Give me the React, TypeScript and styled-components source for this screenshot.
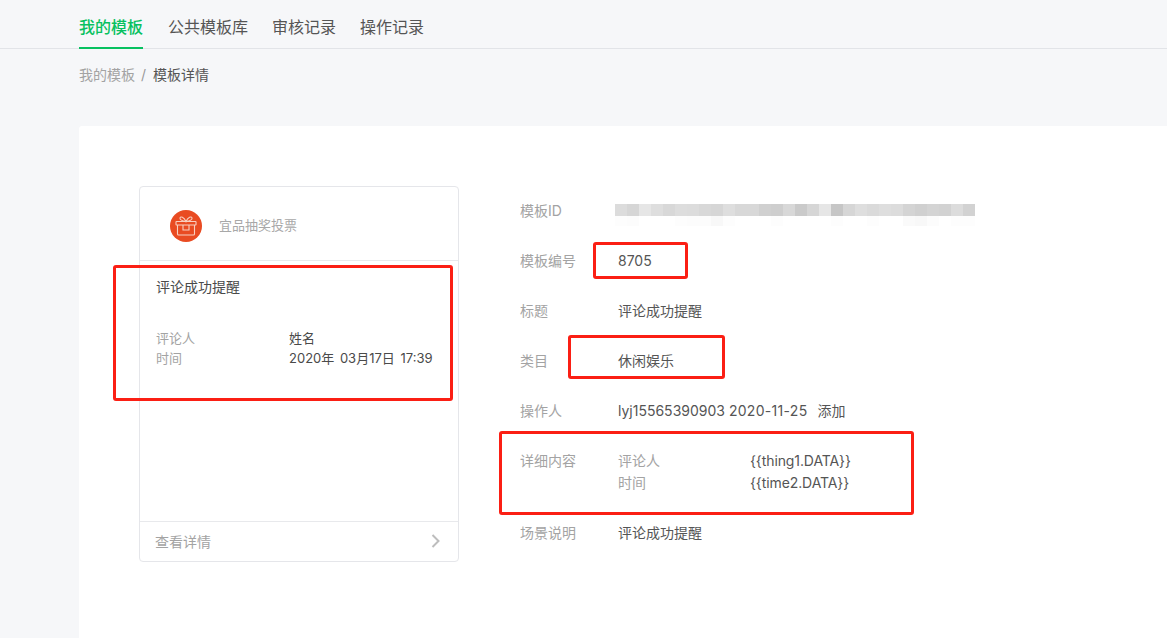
import React from "react";
import styled, { createGlobalStyle } from "styled-components";

const GlobalStyle = createGlobalStyle`
  html, body {
    margin: 0;
    padding: 0;
    background: #f6f7f9;
    font-family: Inter, "Noto Sans CJK SC", "Liberation Sans", sans-serif;
  }
`;

const tabs = ["我的模板", "公共模板库", "审核记录", "操作记录"];

const mosaicTop = [
  "#dcdcdc", "#d6d6d6", "#e6e6e6", "#dedede", "#d8d8d8", "#dddddd", "#dcdcdc", "#d8d8d8", "#d6d6d6", "#dedede",
  "#d8d8d8", "#d8d8d8", "#d0d0d0", "#cecece", "#d8d8d8", "#cacaca", "#d6d6d6", "#e6e6e6", "#c6c6c6", "#d6d6d6",
  "#dedede", "#dadada", "#dedede", "#dcdcdc", "#d4d4d4", "#d0d0d0", "#d4d4d4", "#d2d2d2", "#dcdcdc", "#d2d2d2",
];

const mosaicBottom = [
  "#fdfdfd", "#fcfcfc", "#ffffff", "#ffffff", "#ffffff", "#fdfdfd", "#fcfcfc", "#fcfcfc", "#f8f8f8", "#fdfdfd",
  "#ffffff", "#ffffff", "#ffffff", "#fdfdfd", "#ffffff", "#ffffff", "#ffffff", "#ffffff", "#fdfdfd", "#ffffff",
  "#ffffff", "#fdfdfd", "#ffffff", "#ffffff", "#fafafa", "#f8f8f8", "#fcfcfc", "#ffffff", "#fdfdfd", "#fdfdfd",
];

const GiftIcon = () => (
  <svg width="22" height="22" viewBox="0 0 22 22" fill="none" stroke="#f8cfc0" strokeWidth="1.1">
    <rect x="1" y="6.5" width="20" height="3.5" rx="0.5" />
    <path d="M2.5 10V19a1 1 0 0 0 1 1H18.5a1 1 0 0 0 1-1V10" />
    <path d="M8 10V15H14V10" />
    <path d="M11 6.5C9 2 5.5 1 5 2.8S7 6 11 6.5ZM11 6.5C13 2 16.5 1 17 2.8S15 6 11 6.5Z" />
  </svg>
);

export default function App() {
  return (
    <Page>
      <GlobalStyle />
      <TabBar>
        {tabs.map((t, i) => (
          <Tab key={t} $active={i === 0}>{t}</Tab>
        ))}
      </TabBar>
      <Breadcrumb>
        <CrumbLink>我的模板</CrumbLink>
        <CrumbSep>/</CrumbSep>
        <CrumbCurrent>模板详情</CrumbCurrent>
      </Breadcrumb>
      <Panel>
        <Card>
          <CardHeader>
            <AppIcon><GiftIcon /></AppIcon>
            <AppName>宜品抽奖投票</AppName>
          </CardHeader>
          <CardBody>
            <CardTitle>评论成功提醒</CardTitle>
            <CardRow>
              <CardLabel>评论人</CardLabel>
              <CardValue>姓名</CardValue>
            </CardRow>
            <CardRow>
              <CardLabel>时间</CardLabel>
              <CardValue>2020年 03月17日 17:39</CardValue>
            </CardRow>
          </CardBody>
          <CardFooter>
            <span>查看详情</span>
            <svg width="10" height="14" viewBox="0 0 10 14" fill="none" stroke="#bdbdbd" strokeWidth="2">
              <path d="M1.5 1L7.5 7L1.5 13" />
            </svg>
          </CardFooter>
        </Card>
        <Info>
          <InfoRow>
            <InfoLabel>模板ID</InfoLabel>
            <Mosaic>
              <MosaicRow $height={12}>
                {mosaicTop.map((c, i) => <MosaicCell key={i} style={{ background: c }} />)}
              </MosaicRow>
              <MosaicRow $height={10}>
                {mosaicBottom.map((c, i) => <MosaicCell key={i} style={{ background: c }} />)}
              </MosaicRow>
            </Mosaic>
          </InfoRow>
          <InfoRow>
            <InfoLabel>模板编号</InfoLabel>
            <InfoValue>8705</InfoValue>
          </InfoRow>
          <InfoRow>
            <InfoLabel>标题</InfoLabel>
            <InfoValue>评论成功提醒</InfoValue>
          </InfoRow>
          <InfoRow>
            <InfoLabel>类目</InfoLabel>
            <InfoValue>休闲娱乐</InfoValue>
          </InfoRow>
          <InfoRow>
            <InfoLabel>操作人</InfoLabel>
            <InfoValue>lyj15565390903 <OperatorDate>2020-11-25</OperatorDate> 添加</InfoValue>
          </InfoRow>
          <InfoRow>
            <InfoLabel>详细内容</InfoLabel>
            <Details>
              <DetailRow>
                <DetailKey>评论人</DetailKey>
                <DetailValue>{"{{thing1.DATA}}"}</DetailValue>
              </DetailRow>
              <DetailRow>
                <DetailKey>时间</DetailKey>
                <DetailValue>{"{{time2.DATA}}"}</DetailValue>
              </DetailRow>
            </Details>
          </InfoRow>
          <InfoRow>
            <InfoLabel>场景说明</InfoLabel>
            <InfoValue>评论成功提醒</InfoValue>
          </InfoRow>
        </Info>
      </Panel>
      <Marker $x={113} $y={265} $w={340} $h={136} />
      <Marker $x={593} $y={242} $w={95} $h={37} />
      <Marker $x={568} $y={335} $w={157} $h={44} />
      <Marker $x={499} $y={431} $w={415} $h={84} />
    </Page>
  );
}

const Page = styled.div`
  position: relative;
  width: 1167px;
  height: 638px;
  overflow: hidden;
  background: #f6f7f9;
`;

const TabBar = styled.div`
  display: flex;
  gap: 24px;
  height: 48px;
  padding-left: 79px;
  border-bottom: 1px solid #e2e4e8;
`;

const Tab = styled.div<{ $active?: boolean }>`
  height: 49px;
  box-sizing: border-box;
  padding-top: 15px;
  font-size: 16px;
  line-height: 24px;
  font-weight: ${(p) => (p.$active ? 500 : 400)};
  color: ${(p) => (p.$active ? "#07c160" : "#555")};
  border-bottom: 2px solid ${(p) => (p.$active ? "#07c160" : "transparent")};

  &:first-child {
    margin-right: 1px;
  }
`;

const Breadcrumb = styled.div`
  display: flex;
  align-items: center;
  height: 22px;
  margin-top: 15px;
  padding-left: 79px;
  font-size: 14px;
  line-height: 22px;
`;

const CrumbLink = styled.span`
  color: #a3a3a3;
`;

const CrumbSep = styled.span`
  margin: 0 7px 0 6px;
  color: #999;
`;

const CrumbCurrent = styled.span`
  color: #555;
`;

const Panel = styled.div`
  display: flex;
  align-items: flex-start;
  margin: 40px 0 0 79px;
  padding: 60px 0 0 60px;
  height: 512px;
  box-sizing: border-box;
  background: #fff;
  border-top-left-radius: 3px;
`;

const Card = styled.div`
  display: flex;
  flex-direction: column;
  flex: none;
  box-sizing: border-box;
  width: 320px;
  height: 376px;
  border: 1px solid #e5e6ea;
  border-radius: 4px;
`;

const CardHeader = styled.div`
  display: flex;
  align-items: center;
  height: 74px;
  box-sizing: border-box;
  padding: 5px 0 0 30px;
  border-bottom: 1px solid #e8e9ec;
`;

const AppIcon = styled.div`
  display: flex;
  align-items: center;
  justify-content: center;
  width: 32px;
  height: 32px;
  border-radius: 50%;
  background: #e94b22;
`;

const AppName = styled.div`
  margin: -4px 0 0 17px;
  font-size: 13px;
  color: #a8a8a8;
`;

const CardBody = styled.div`
  flex: 1;
  padding: 15px 16px 0;
`;

const CardTitle = styled.div`
  margin-bottom: 30px;
  font-size: 14px;
  line-height: 22px;
  color: #4a4a4a;
`;

const CardRow = styled.div`
  display: flex;
  font-size: 13px;
  line-height: 20px;
`;

const CardLabel = styled.div`
  width: 133px;
  color: #a3a3a3;
`;

const CardValue = styled.div`
  color: #4a4a4a;
  word-spacing: 2px;
`;

const CardFooter = styled.div`
  display: flex;
  align-items: center;
  justify-content: space-between;
  height: 40px;
  padding: 0 17px 2px 15px;
  box-sizing: border-box;
  border-top: 1px solid #e8e9ec;
  font-size: 14px;
  color: #a3a3a3;
`;

const Info = styled.div`
  margin-left: 61px;
  padding-top: 14px;
`;

const InfoRow = styled.div`
  display: flex;
  margin-bottom: 28px;
  font-size: 14px;
  line-height: 22px;
`;

const InfoLabel = styled.div`
  width: 98px;
  flex: none;
  color: #a3a3a3;
`;

const InfoValue = styled.div`
  color: #555;
`;

const OperatorDate = styled.span`
  margin-right: 6px;
  letter-spacing: 0.3px;
`;

const Mosaic = styled.div`
  height: 22px;
  margin: 4px 0 -4px -3px;
`;

const MosaicRow = styled.div<{ $height: number }>`
  display: flex;
  height: ${(p) => p.$height}px;
`;

const MosaicCell = styled.div`
  width: 12px;
`;

const Details = styled.div`
  display: flex;
  flex-direction: column;
`;

const DetailRow = styled.div`
  display: flex;
`;

const DetailKey = styled.div`
  width: 132px;
  color: #a3a3a3;
`;

const DetailValue = styled(InfoValue)`
  letter-spacing: -0.1px;
`;

const Marker = styled.div<{ $x: number; $y: number; $w: number; $h: number }>`
  position: absolute;
  left: ${(p) => p.$x}px;
  top: ${(p) => p.$y}px;
  width: ${(p) => p.$w}px;
  height: ${(p) => p.$h}px;
  box-sizing: border-box;
  border: 3px solid #fb1f14;
  border-radius: 3px;
`;
